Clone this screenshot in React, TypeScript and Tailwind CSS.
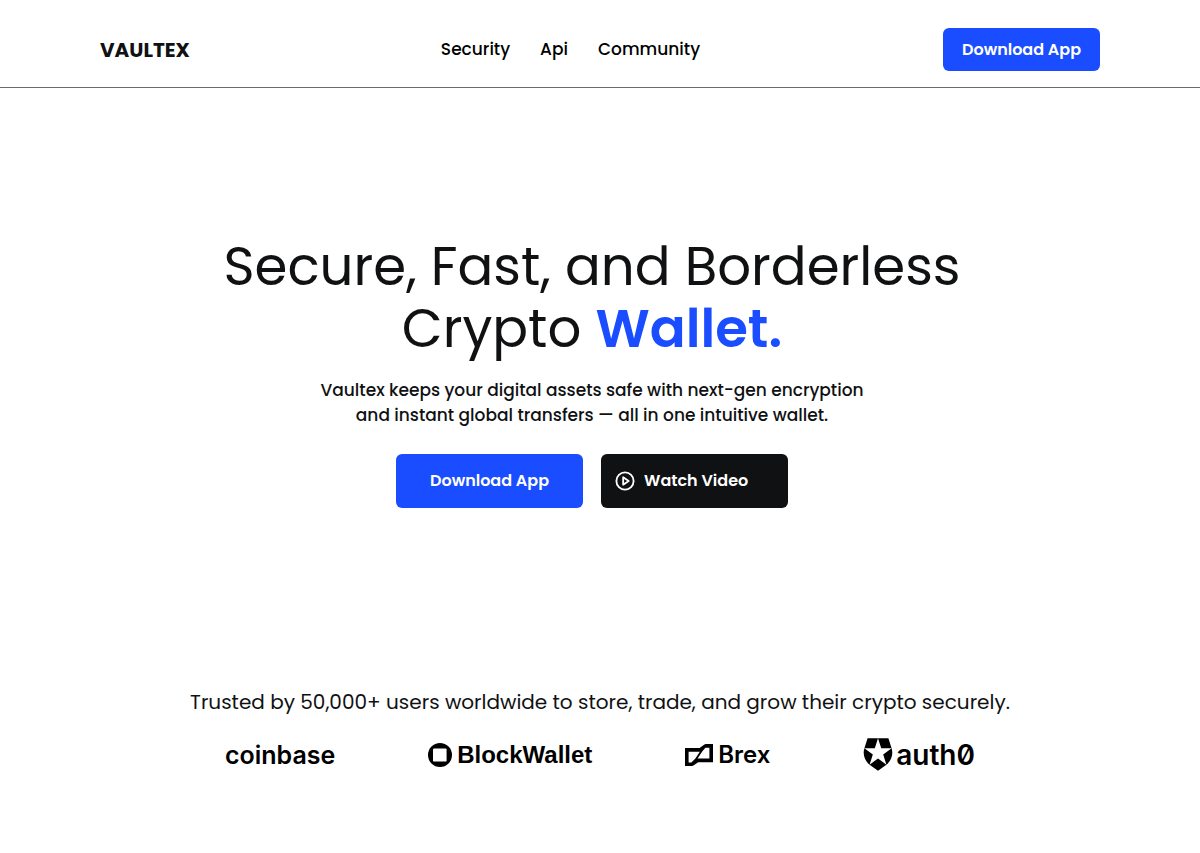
const NAV_LINKS = ["Security", "Api", "Community"];

const PlayIcon = () => (
  <svg
    viewBox="0 0 24 24"
    className="size-[22px]"
    fill="none"
    stroke="currentColor"
    strokeWidth="2"
    strokeLinejoin="round"
    aria-hidden="true"
  >
    <circle cx="12" cy="12" r="9.4" />
    <path d="M10 8v8l6-4z" />
  </svg>
);

const BlockWalletIcon = () => (
  <svg viewBox="0 0 24 24" className="size-6" aria-hidden="true">
    <circle cx="12" cy="12" r="12" fill="currentColor" />
    <rect x="5" y="5.4" width="13.6" height="13.2" rx="1.2" fill="#fff" />
  </svg>
);

const BrexIcon = () => (
  <svg viewBox="0 0 28 22" className="h-[22px] w-7" fill="currentColor" aria-hidden="true">
    <path
      fillRule="evenodd"
      d="M0 4H14.600L19.400 0.400Q20 0 20.800 0H28V18.200H13.200L8.400 21.600Q7.800 22 7 22H0ZM3.600 7.800V18.400H6.400L10.400 14.600L14.800 7.800ZM20.400 3.800L17.200 7.400L12.600 14.400H24.400V3.800Z"
    />
  </svg>
);

const Auth0Icon = () => (
  <svg viewBox="1 0 22 24" className="h-[33px] w-[30px]" fill="currentColor" aria-hidden="true">
    <path d="M21.98 7.448L19.62 0H4.347L2.02 7.448c-1.352 4.312.03 9.206 3.815 12.015L12.007 24l6.157-4.552c3.755-2.81 5.182-7.688 3.815-12.015l-6.16 4.58 2.343 7.45-6.157-4.597-6.158 4.58 2.358-7.433-6.188-4.55 7.63-.045L12.008 0l2.356 7.404 7.615.044z" />
  </svg>
);

const Header = () => (
  <header className="border-b border-[#6b6c6e] px-6 lg:px-[100px]">
    <div className="flex items-center justify-between pt-7 pb-4">
      <a href="#" className="text-xl font-bold">
        VAULTEX
      </a>
      <nav className="flex gap-[30px] pl-2 text-[17px] font-medium text-black">
        {NAV_LINKS.map((link) => (
          <a key={link} href="#">
            {link}
          </a>
        ))}
      </nav>
      <button
        type="button"
        className="h-[43px] w-[157px] rounded-md bg-[#1a4dff] text-base font-semibold text-white"
      >
        Download App
      </button>
    </div>
  </header>
);

const Hero = () => (
  <section className="flex flex-col items-center pt-[148px] pr-4 text-center">
    <h1 className="text-[53px] leading-[62px]">
      Secure, Fast, and Borderless
      <br />
      Crypto <span className="font-semibold text-[#1a4dff]">Wallet.</span>
    </h1>
    <p className="mt-[18px] text-[17px] leading-[25px] font-medium">
      Vaultex keeps your digital assets safe with next-gen encryption
      <br />
      and instant global transfers — all in one intuitive wallet.
    </p>
    <div className="mt-[26px] flex gap-[18px] text-base font-semibold text-white">
      <button type="button" className="h-[54px] w-[187px] rounded-md bg-[#1a4dff]">
        Download App
      </button>
      <button
        type="button"
        className="flex h-[54px] w-[187px] items-center gap-2 rounded-md bg-[#101113] pl-[13px]"
      >
        <PlayIcon />
        Watch Video
      </button>
    </div>
  </section>
);

const Partners = () => (
  <section className="mt-[180px] flex flex-col items-center pb-20">
    <p className="text-xl leading-7">
      Trusted by 50,000+ users worldwide to store, trade, and grow their crypto securely.
    </p>
    <div className="mt-[22px] flex w-full max-w-[750px] items-center justify-between font-[Inter,sans-serif] text-black">
      <span className="text-[25px] leading-8 font-semibold">coinbase</span>
      <div className="flex items-center gap-[5px]">
        <BlockWalletIcon />
        <span className="font-['Liberation_Sans',sans-serif] text-[24px] leading-8 font-bold">
          BlockWallet
        </span>
      </div>
      <div className="flex items-center gap-[5px]">
        <BrexIcon />
        <span className="text-[24px] leading-8 font-semibold">Brex</span>
      </div>
      <div className="flex items-center gap-[3px]">
        <Auth0Icon />
        <span className="text-[28px] leading-8 font-semibold slashed-zero">auth0</span>
      </div>
    </div>
  </section>
);

const App = () => (
  <div className="min-h-screen bg-white font-[Poppins,Inter,sans-serif] text-[#101113]">
    <Header />
    <main>
      <Hero />
      <Partners />
    </main>
  </div>
);

export default App;
